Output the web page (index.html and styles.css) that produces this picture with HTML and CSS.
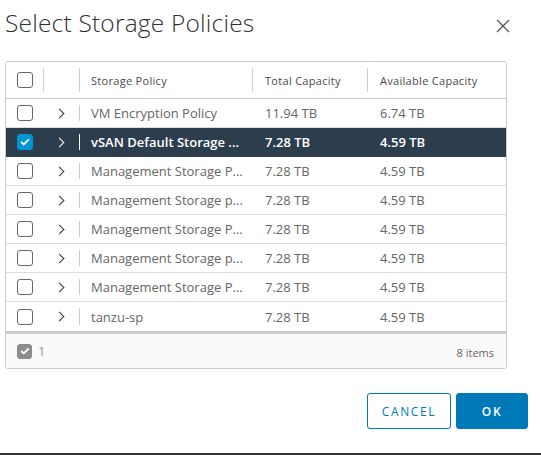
FILE: index.html
```html
<!DOCTYPE html>
<html>
<head>
<meta charset="utf-8">
<link rel="stylesheet" href="styles.css">
</head>
<body>
<div class="modal">
  <div class="modal-header">
    <h3 class="title">Select Storage Policies</h3>
    <button class="close" aria-label="Close">
      <svg width="14" height="14" viewBox="0 0 14 14"><path d="M1 1 L13 13 M13 1 L1 13" stroke="#555" stroke-width="1.3" fill="none"/></svg>
    </button>
  </div>
  <div class="grid">
    <div class="row head">
      <div class="cell c-check"><span class="cb"></span></div>
      <div class="cell c-exp sep"></div>
      <div class="cell c-name sep">Storage Policy</div>
      <div class="cell c-total sep">Total Capacity</div>
      <div class="cell c-avail sep">Available Capacity</div>
    </div>
    <div class="body">
      <div class="row">
        <div class="cell c-check"><span class="cb"></span></div>
        <div class="cell c-exp"><span class="chev"></span></div>
        <div class="cell c-name sep">VM Encryption Policy</div>
        <div class="cell c-total">11.94 TB</div>
        <div class="cell c-avail">6.74 TB</div>
      </div>
      <div class="row selected">
        <div class="cell c-check"><span class="cb checked"><svg width="10" height="8" viewBox="0 0 10 8"><path d="M1.2 4 L3.8 6.4 L8.8 1.3" stroke="#fff" stroke-width="1.8" fill="none"/></svg></span></div>
        <div class="cell c-exp"><span class="chev"></span></div>
        <div class="cell c-name sep">vSAN Default Storage ...</div>
        <div class="cell c-total">7.28 TB</div>
        <div class="cell c-avail">4.59 TB</div>
      </div>
      <div class="row">
        <div class="cell c-check"><span class="cb"></span></div>
        <div class="cell c-exp"><span class="chev"></span></div>
        <div class="cell c-name sep">Management Storage P...</div>
        <div class="cell c-total">7.28 TB</div>
        <div class="cell c-avail">4.59 TB</div>
      </div>
      <div class="row">
        <div class="cell c-check"><span class="cb"></span></div>
        <div class="cell c-exp"><span class="chev"></span></div>
        <div class="cell c-name sep">Management Storage p...</div>
        <div class="cell c-total">7.28 TB</div>
        <div class="cell c-avail">4.59 TB</div>
      </div>
      <div class="row">
        <div class="cell c-check"><span class="cb"></span></div>
        <div class="cell c-exp"><span class="chev"></span></div>
        <div class="cell c-name sep">Management Storage P...</div>
        <div class="cell c-total">7.28 TB</div>
        <div class="cell c-avail">4.59 TB</div>
      </div>
      <div class="row">
        <div class="cell c-check"><span class="cb"></span></div>
        <div class="cell c-exp"><span class="chev"></span></div>
        <div class="cell c-name sep">Management Storage p...</div>
        <div class="cell c-total">7.28 TB</div>
        <div class="cell c-avail">4.59 TB</div>
      </div>
      <div class="row">
        <div class="cell c-check"><span class="cb"></span></div>
        <div class="cell c-exp"><span class="chev"></span></div>
        <div class="cell c-name sep">Management Storage P...</div>
        <div class="cell c-total">7.28 TB</div>
        <div class="cell c-avail">4.59 TB</div>
      </div>
      <div class="row last">
        <div class="cell c-check"><span class="cb"></span></div>
        <div class="cell c-exp"><span class="chev"></span></div>
        <div class="cell c-name sep">tanzu-sp</div>
        <div class="cell c-total">7.28 TB</div>
        <div class="cell c-avail">4.59 TB</div>
      </div>
    </div>
    <div class="footer">
      <div class="sel-count"><span class="cb grey"><svg width="10" height="8" viewBox="0 0 10 8"><path d="M1.2 4 L3.8 6.4 L8.8 1.3" stroke="#fff" stroke-width="1.8" fill="none"/></svg></span><span class="num">1</span></div>
      <div class="items">8 items</div>
    </div>
  </div>
  <div class="actions">
    <button class="btn btn-outline">CANCEL</button>
    <button class="btn btn-primary">OK</button>
  </div>
</div>
</body>
</html>
```
FILE: styles.css
```css
html, body {
  margin: 0;
  padding: 0;
  background: #fff;
}
body {
  font-family: "Open Sans", "Liberation Sans", sans-serif;
  color: #666;
  width: 541px;
  height: 455px;
  overflow: hidden;
  box-sizing: border-box;
  border-bottom: 2px solid #333;
}
.modal {
  padding: 0 13px 0 5px;
}
.modal-header {
  display: flex;
  justify-content: space-between;
  align-items: flex-start;
  height: 61px;
}
.title {
  margin: 6px 0 0 0;
  font-size: 24.5px;
  font-weight: 300;
  color: #313131;
  letter-spacing: 0.2px;
}
.close {
  background: none;
  border: none;
  padding: 0;
  margin: 19px 18px 0 0;
  width: 14px;
  height: 14px;
  display: flex;
}
.grid {
  border: 1px solid #ccc;
  border-radius: 3px;
  width: 500px;
  overflow: hidden;
}
.row {
  display: grid;
  grid-template-columns: 37px 36px 173px 115px 1fr;
  height: 29px;
  border-bottom: 1px solid #ddd;
  box-sizing: border-box;
  font-size: 13px;
  align-items: center;
}
.row.last {
  border-bottom: none;
}
.row.head {
  height: 37px;
  font-size: 11px;
  font-weight: 500;
  color: #4a4a4a;
  border-bottom: 1px solid #ccc;
  letter-spacing: 0.3px;
}
.cell {
  position: relative;
  height: 100%;
  display: flex;
  align-items: center;
  white-space: nowrap;
}
.c-name { padding-left: 12px; }
.c-total, .c-avail { padding-left: 13px; }
.c-check, .c-exp { justify-content: center; }
.c-check { padding-left: 1px; }
.sep::before {
  content: "";
  position: absolute;
  left: 0;
  top: 6px;
  bottom: 6px;
  width: 1px;
  background: #ccc;
}
.head .sep::before {
  top: 6px;
  bottom: 6px;
}
.cb {
  display: inline-flex;
  align-items: center;
  justify-content: center;
  width: 16px;
  height: 16px;
  box-sizing: border-box;
  border: 1px solid #666;
  border-radius: 3px;
  background: #fff;
}
.cb.checked {
  background: #0095d3;
  border-color: #0095d3;
}
.cb.grey {
  background: #8c8c8c;
  border-color: #8c8c8c;
  width: 15px;
  height: 15px;
}
.chev {
  width: 6px;
  height: 6px;
  border-right: 1.4px solid #333;
  border-top: 1.4px solid #333;
  transform: rotate(45deg);
  margin-left: -4px;
}
.selected {
  background: #2c3e4e;
  color: #fff;
  font-weight: 600;
  border-bottom-color: #2c3e4e;
}
.selected .chev { border-color: #fff; }
.selected .sep::before { background: #fff; }
.footer {
  border-top: 3px solid #ccc;
  background: #fafafa;
  height: 37px;
  display: flex;
  justify-content: space-between;
  align-items: flex-start;
  padding: 8px 12px 0 11px;
  box-sizing: border-box;
  font-size: 11px;
  color: #666;
}
.sel-count {
  display: flex;
  align-items: center;
  gap: 6px;
  color: #999;
  font-size: 13px;
}
.items { margin-top: 3px; }
.actions {
  display: flex;
  justify-content: flex-end;
  gap: 5px;
  margin-top: 24px;
}
.btn {
  height: 36px;
  border-radius: 3px;
  font-family: "Open Sans", sans-serif;
  font-size: 12px;
  letter-spacing: 1.6px;
  cursor: pointer;
}
.btn-outline {
  width: 84px;
  background: #fff;
  border: 1px solid #0079b8;
  color: #0079b8;
}
.btn-primary {
  width: 72px;
  background: #0079b8;
  border: 1px solid #0079b8;
  color: #fff;
  font-weight: 600;
}
```
